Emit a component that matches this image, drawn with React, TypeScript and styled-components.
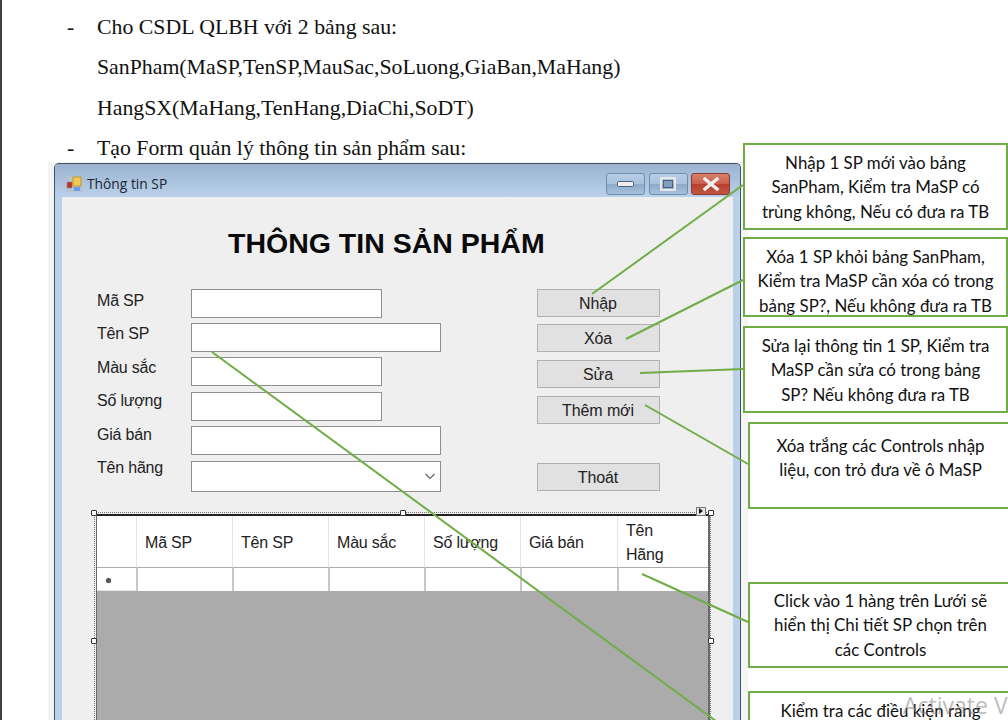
import React from "react";
import styled, { createGlobalStyle } from "styled-components";

const Global = createGlobalStyle`
  html, body { margin: 0; padding: 0; background: #fff; }
  body { width: 1008px; height: 720px; overflow: hidden; }
`;

const Page = styled.div`
  position: relative;
  width: 1008px;
  height: 720px;
  overflow: hidden;
  background: #fff;
  box-sizing: border-box;
  border-left: 2px solid #3d4043;
`;

const Doc = styled.div`
  padding: 7px 0 0 65px;
  font-family: "Liberation Serif", serif;
  font-size: 21.8px;
  line-height: 40.4px;
  color: #111;
`;

const DocLine = styled.div`
  display: flex;
`;

const Dash = styled.span`
  width: 30px;
`;

const Halo = styled.div`
  margin: -7px 0 0 46px;
  width: 700px;
  height: 600px;
  padding: 1px 7px 0 6px;
  box-sizing: border-box;
  background: #f4f4f4;
`;

const Win = styled.div`
  width: 687px;
  height: 600px;
  box-sizing: border-box;
  border: 1px solid #46525e;
  border-bottom: 0;
  border-radius: 5px 5px 0 0;
  background: #b9d1ea;
  display: flex;
  flex-direction: column;
`;

const TitleBar = styled.div`
  height: 33px;
  flex: none;
  box-sizing: border-box;
  display: flex;
  align-items: center;
  padding: 7px 10px 0 11px;
  background: linear-gradient(#9bb3d0, #b9d1ea);
  border-radius: 4px 4px 0 0;
`;

const TitleText = styled.span`
  font-family: "Open Sans", sans-serif;
  font-size: 13.8px;
  color: #1d2530;
  margin-left: 4px;
  flex: 1;
`;

const WinBtns = styled.div`
  display: flex;
  gap: 3.5px;
`;

const WinBtn = styled.div<{ $close?: boolean }>`
  width: 39px;
  height: 22px;
  box-sizing: border-box;
  border: 1px solid ${(p) => (p.$close ? "#8c3a2e" : "#6f8cac")};
  border-radius: 3px;
  background: ${(p) =>
    p.$close
      ? "linear-gradient(#d87f6c 0, #c9604c 48%, #b8412b 52%, #c25540 100%)"
      : "linear-gradient(#b7cde4 0, #a9c2dd 48%, #8fabc9 52%, #a6c0dc 100%)"};
  display: flex;
  align-items: center;
  justify-content: center;
`;

const Client = styled.div`
  flex: 1;
  margin: 0 7px;
  background: #efefef;
  position: relative;
  padding-left: 35px;
`;

const Heading = styled.h1`
  margin: 0;
  padding: 27px 0 0 131px;
  height: 65px;
  box-sizing: border-box;
  font-family: "Liberation Sans", sans-serif;
  font-weight: 700;
  font-size: 28.5px;
  line-height: 38px;
  color: #0a0a0a;
`;

const FormArea = styled.div`
  display: flex;
  height: 225px;
  margin-top: 27px;
`;

const Labels = styled.div`
  width: 94px;
  display: flex;
  flex-direction: column;
  gap: 13.5px;
  padding-top: 2px;
`;

const Label = styled.div`
  font-family: "Liberation Sans", sans-serif;
  font-size: 16px;
  letter-spacing: -0.2px;
  line-height: 20px;
  color: #222;
`;

const Fields = styled.div`
  width: 346px;
  display: flex;
  flex-direction: column;
  gap: 5.4px;
`;

const Input = styled.div<{ $wide?: boolean; $tall?: boolean }>`
  width: ${(p) => (p.$wide ? 250 : 191)}px;
  height: ${(p) => (p.$tall ? 31 : 29)}px;
  flex: none;
  box-sizing: border-box;
  background: #fff;
  border: 1px solid #8f8f8f;
  display: flex;
  align-items: center;
  justify-content: flex-end;
  padding-right: 3px;
`;

const Buttons = styled.div`
  width: 123px;
  display: flex;
  flex-direction: column;
`;

const Btn = styled.div<{ $mt?: number }>`
  height: 28px;
  flex: none;
  box-sizing: border-box;
  margin-top: ${(p) => p.$mt ?? 0}px;
  padding: 3px 1px 0 0;
  background: #e1e1e1;
  border: 1px solid #b0b0b0;
  display: flex;
  align-items: center;
  justify-content: center;
  font-family: "Liberation Sans", sans-serif;
  font-size: 16px;
  letter-spacing: -0.1px;
  color: #222;
`;

const GridWrap = styled.div`
  position: relative;
  width: 614px;
  height: 400px;
  margin: 0 0 0 -1px;
  background: #ababab;
  border-top: 2px solid #222;
  border-left: 1px solid #6a6a6a;
  border-right: 2px solid #6a6a6a;
  box-sizing: border-box;
  &::before {
    content: "";
    position: absolute;
    inset: -4px -3px -4px -3px;
    border: 1px dotted #777;
    pointer-events: none;
  }
`;

const GridTable = styled.div`
  display: grid;
  grid-template-columns: 39px 96px 96px 96px 96px 97px 1fr;
  grid-template-rows: 52px 23px;
  background: #fff;
`;

const HeadCell = styled.div<{ $first?: boolean }>`
  box-sizing: border-box;
  border-bottom: 1px solid #acacac;
  border-left: ${(p) => (p.$first ? "0" : "1px solid #e4e4e4")};
  padding: 4px 0 0 8px;
  display: flex;
  align-items: center;
  font-family: "Liberation Sans", sans-serif;
  font-size: 16px;
  letter-spacing: -0.2px;
  line-height: 24px;
  color: #222;
`;

const RowCell = styled.div`
  box-sizing: border-box;
  border-left: 2px solid #c8c8c8;
`;

const RowHeadCell = styled.div`
  display: flex;
  align-items: center;
  justify-content: center;
  background: #fff;
  border-bottom: 1px solid #e6e6e6;
  box-sizing: border-box;
  padding-right: 17px;
  padding-top: 3px;
`;

const Dot = styled.span`
  width: 5px;
  height: 5px;
  border-radius: 50%;
  background: #555;
  box-shadow: 0 0 1px #777;
`;

const Handle = styled.span<{ $x: number; $y: number }>`
  position: absolute;
  left: ${(p) => p.$x}px;
  top: ${(p) => p.$y}px;
  width: 6px;
  height: 6px;
  box-sizing: border-box;
  background: #fff;
  border: 1px solid #333;
  border-radius: 1px;
`;

const SmartTag = styled.span`
  position: absolute;
  left: 599px;
  top: -9px;
  width: 10px;
  height: 9px;
  box-sizing: border-box;
  background: #e8e8e8;
  border: 1px solid #777;
  display: flex;
  align-items: center;
  justify-content: center;
  &::after {
    content: "";
    border-left: 4px solid #111;
    border-top: 3px solid transparent;
    border-bottom: 3px solid transparent;
  }
`;

const Callout = styled.div<{ $x: number; $y: number; $h: number; $pad: number }>`
  position: absolute;
  left: ${(p) => p.$x}px;
  top: ${(p) => p.$y}px;
  width: 265px;
  height: ${(p) => p.$h}px;
  box-sizing: border-box;
  background: #fff;
  border: 2px solid #70ad47;
  padding: ${(p) => p.$pad}px 4px 0;
  text-align: center;
  font-family: "Lato", "Noto Sans", sans-serif;
  font-size: 16.9px;
  line-height: 24.3px;
  color: #111;
  white-space: nowrap;
`;

const Lines = styled.svg`
  position: absolute;
  left: -2px;
  top: 0;
  pointer-events: none;
`;

const Watermark = styled.div`
  position: absolute;
  left: 901px;
  top: 689px;
  font-family: "Open Sans", sans-serif;
  font-size: 23px;
  line-height: 32px;
  color: rgba(120, 120, 120, 0.5);
  white-space: nowrap;
`;

const labels = ["Mã SP", "Tên SP", "Màu sắc", "Số lượng", "Giá bán", "Tên hãng"];
const heads = ["Mã SP", "Tên SP", "Màu sắc", "Số lượng", "Giá bán"];

const callouts = [
  { x: 741, y: 143, h: 87, p: 6, t: ["Nhập 1 SP mới vào bảng", "SanPham, Kiểm tra MaSP có", "trùng không, Nếu có đưa ra TB"] },
  { x: 741, y: 237, h: 80, p: 6, t: ["Xóa 1 SP khỏi bảng SanPham,", "Kiểm tra MaSP cần xóa có trong", "bảng SP?, Nếu không đưa ra TB"] },
  { x: 741, y: 326, h: 87, p: 6, t: ["Sửa lại thông tin 1 SP, Kiểm tra", "MaSP cần sửa có trong bảng", "SP? Nếu không đưa ra TB"] },
  { x: 746, y: 422, h: 87, p: 10, t: ["Xóa trắng các Controls nhập", "liệu, con trỏ đưa về ô MaSP"] },
  { x: 746, y: 582, h: 86, p: 5, t: ["Click vào 1 hàng trên Lưới sẽ", "hiển thị Chi tiết SP chọn trên", "các Controls"] },
  { x: 746, y: 691, h: 80, p: 6, t: ["Kiểm tra các điều kiện ràng"] },
];

const connectors = [
  [592, 294, 743, 185],
  [626, 339, 743, 280],
  [640, 373, 743, 369],
  [645, 405, 748, 464],
  [642, 574, 748, 622],
  [212, 352, 720, 724],
];

export default function App() {
  return (
    <Page>
      <Global />
      <Doc>
        <DocLine><Dash>-</Dash>Cho CSDL QLBH với 2 bảng sau:</DocLine>
        <DocLine><Dash />SanPham(MaSP,TenSP,MauSac,SoLuong,GiaBan,MaHang)</DocLine>
        <DocLine><Dash />HangSX(MaHang,TenHang,DiaChi,SoDT)</DocLine>
        <DocLine><Dash>-</Dash>Tạo Form quản lý thông tin sản phẩm sau:</DocLine>
      </Doc>
      <Halo>
        <Win>
          <TitleBar>
            <svg width="17" height="16" viewBox="0 0 17 16">
              <rect x="0" y="0" width="17" height="16" fill="#b4c4d6" />
              <rect x="1" y="6" width="5" height="6" fill="#c8302a" stroke="#8a8a8a" strokeWidth="0.5" />
              <rect x="7" y="1" width="8" height="9" fill="#f3c94f" stroke="#b98a20" strokeWidth="0.8" />
              <rect x="8" y="11" width="6" height="4" fill="#6a9be8" />
            </svg>
            <TitleText>Thông tin SP</TitleText>
            <WinBtns>
              <WinBtn>
                <svg width="18" height="6" viewBox="0 0 18 6"><rect x="0.5" y="0.5" width="16" height="5" rx="1" fill="#eee" stroke="#4c5f75" /></svg>
              </WinBtn>
              <WinBtn>
                <svg width="16" height="14" viewBox="0 0 16 14"><rect x="1" y="1" width="14" height="12" fill="none" stroke="#e8e8e8" strokeWidth="2" /><rect x="3.5" y="3.5" width="9" height="7" fill="#7f9dbf" stroke="#4c5f75" /></svg>
              </WinBtn>
              <WinBtn $close>
                <svg width="18" height="14" viewBox="0 0 18 14"><path d="M3 2 L15 12 M15 2 L3 12" stroke="#eee" strokeWidth="3.4" strokeLinecap="square" /></svg>
              </WinBtn>
            </WinBtns>
          </TitleBar>
          <Client>
            <Heading>THÔNG TIN SẢN PHẨM</Heading>
            <FormArea>
              <Labels>
                {labels.map((l) => <Label key={l}>{l}</Label>)}
              </Labels>
              <Fields>
                <Input />
                <Input $wide />
                <Input />
                <Input />
                <Input $wide />
                <Input $wide $tall>
                  <svg width="14" height="14" viewBox="0 0 14 14"><path d="M2.5 5 L7 9.5 L11.5 5" fill="none" stroke="#666" strokeWidth="1.2" /></svg>
                </Input>
              </Fields>
              <Buttons>
                <Btn>Nhập</Btn>
                <Btn $mt={7}>Xóa</Btn>
                <Btn $mt={8}>Sửa</Btn>
                <Btn $mt={8}>Thêm mới</Btn>
                <Btn $mt={39}>Thoát</Btn>
              </Buttons>
            </FormArea>
            <GridWrap>
              <GridTable>
                <HeadCell $first />
                {heads.map((h) => <HeadCell key={h}>{h}</HeadCell>)}
                <HeadCell>Tên<br />Hãng</HeadCell>
                <RowHeadCell><Dot /></RowHeadCell>
                <RowCell /><RowCell /><RowCell /><RowCell /><RowCell /><RowCell />
              </GridTable>
              <Handle $x={-6} $y={-6} />
              <Handle $x={303} $y={-6} />
              <Handle $x={611} $y={-6} />
              <Handle $x={-6} $y={122} />
              <Handle $x={611} $y={122} />
              <SmartTag />
            </GridWrap>
          </Client>
        </Win>
      </Halo>
      <Lines width="1010" height="720" viewBox="0 0 1010 720">
        {connectors.map(([a, b, c, d]) => (
          <line key={a + "-" + b} x1={a} y1={b} x2={c} y2={d} stroke="#70ad47" strokeWidth="2" />
        ))}
      </Lines>
      {callouts.map((c) => (
        <Callout key={c.y} $x={c.x} $y={c.y} $h={c.h} $pad={c.p}>
          {c.t.map((l) => <div key={l}>{l}</div>)}
        </Callout>
      ))}
      <Watermark>Activate V</Watermark>
    </Page>
  );
}
